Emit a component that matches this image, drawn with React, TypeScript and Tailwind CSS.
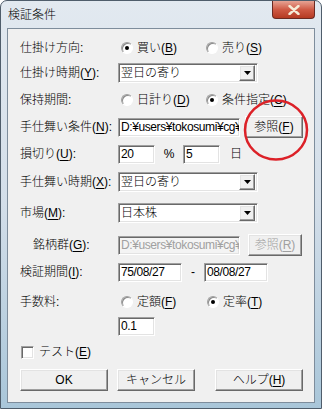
import type { ReactNode } from 'react'

const sunken =
  'border border-t-[#a0a0a0] border-l-[#a0a0a0] border-r-white border-b-white shadow-[inset_1px_1px_0_#696969,inset_-1px_-1px_0_#e3e3e3]'
const raised =
  'border border-t-white border-l-white border-r-[#696969] border-b-[#696969] shadow-[inset_-1px_-1px_0_#a0a0a0,inset_1px_1px_0_#e3e3e3] bg-[#f0f0f0]'

function Key({ children }: { children: ReactNode }) {
  return <span className="underline underline-offset-2">{children}</span>
}

function Edit({ w, value, disabled = false }: { w: string; value: string; disabled?: boolean }) {
  return (
    <div
      className={`${w} h-[19px] ${sunken} ${disabled ? 'bg-[#f4f4f4] text-[#a0a0a0]' : 'bg-white text-black'} flex items-center overflow-hidden whitespace-nowrap pl-[2px] tracking-[-0.4px]`}
    >
      {value}
    </div>
  )
}

function Combo({ value }: { value: string }) {
  return (
    <div className={`w-[140px] h-[20px] ${sunken} bg-white flex items-center pl-[2px] pr-[2px]`}>
      <span className="flex-1 whitespace-nowrap">{value}</span>
      <div className={`w-[16px] h-[16px] ${raised} flex items-center justify-center`}>
        <svg width="7" height="4" viewBox="0 0 7 4">
          <path d="M0 0h7L3.5 4z" fill="#000" />
        </svg>
      </div>
    </div>
  )
}

function Radio({ checked = false, children, w }: { checked?: boolean; children: ReactNode; w?: string }) {
  return (
    <div className={`flex items-center ${w ?? ''}`}>
      <div className="ml-[3px] w-[12px] h-[12px] rounded-full border border-t-[#a0a0a0] border-l-[#a0a0a0] border-r-white border-b-white bg-white shadow-[inset_1px_1px_0_#8a8a8a] flex items-center justify-center">
        {checked && <div className="w-[4px] h-[4px] rounded-full bg-black" />}
      </div>
      <span className="ml-[4px] whitespace-nowrap">{children}</span>
    </div>
  )
}

function Btn({ w, children, disabled = false }: { w: string; children: ReactNode; disabled?: boolean }) {
  return (
    <div
      className={`${w} h-[22px] ${raised} flex items-center justify-center whitespace-nowrap ${disabled ? 'text-[#a0a0a0]' : 'text-black'}`}
    >
      {children}
    </div>
  )
}

function Row({ label, children, className = '', h = 'h-[20px]' }: { label: ReactNode; children?: ReactNode; className?: string; h?: string }) {
  return (
    <div className={`flex items-center ${h} ${className}`}>
      <div className="w-[98px] shrink-0 whitespace-nowrap">{label}</div>
      {children}
    </div>
  )
}

export default function App() {
  return (
    <div className="w-[322px] h-[409px] relative overflow-hidden rounded-t-[7px] border border-[#4f5d6b] bg-gradient-to-b from-[#e2e9f0] via-[#d3dee9] to-[#a9c6d9] text-[12px] leading-[14px] font-light text-black font-['Liberation_Sans','Noto_Sans_CJK_JP',sans-serif]">
      {/* title bar */}
      <div className="h-[27px] flex items-start justify-between">
        <div className="pl-[7px] pt-[7px] text-[12px]">検証条件</div>
        <div className="mr-[6px] w-[43px] h-[18px] rounded-b-[4px] border border-t-0 border-[#6b2a22] bg-gradient-to-b from-[#e6a394] via-[#cf5a45] to-[#b53a22] flex items-center justify-center">
          <svg width="12" height="10" viewBox="0 0 12 10">
            <path d="M1.5 1l9 8M10.5 1l-9 8" stroke="#f5ecd8" strokeWidth="2.4" strokeLinecap="round" />
          </svg>
        </div>
      </div>

      {/* client area */}
      <div className="mx-[6px] h-[375px] border border-[#7e8d9c] bg-[#f0f0f0] pl-[12px] pt-[9px]">
        <Row label="仕掛け方向:">
          <Radio checked w="w-[85px]">
            買い(<Key>B</Key>)
          </Radio>
          <Radio>
            売り(<Key>S</Key>)
          </Radio>
        </Row>

        <Row label={<>仕掛け時期(<Key>Y</Key>):</>} className="mt-[5px]">
          <Combo value="翌日の寄り" />
        </Row>

        <Row label="保持期間:" className="mt-[7px]">
          <Radio w="w-[85px]">
            日計り(<Key>D</Key>)
          </Radio>
          <Radio checked>
            条件指定(<Key>C</Key>)
          </Radio>
        </Row>

        <Row label={<>手仕舞い条件(<Key>N</Key>):</>} className="mt-[6px]" h="h-[22px]">
          <Edit w="w-[122px]" value="D:¥users¥tokosumi¥cg¥" />
          <div className="ml-[5px]">
            <Btn w="w-[58px]">
              参照(<Key>F</Key>)
            </Btn>
          </div>
        </Row>

        <Row label={<>損切り(<Key>U</Key>):</>} className="mt-[6px]">
          <Edit w="w-[37px]" value="20" />
          <div className="w-[28px] text-center">%</div>
          <Edit w="w-[37px]" value="5" />
          <div className="ml-[10px]">日</div>
        </Row>

        <Row label={<>手仕舞い時期(<Key>X</Key>):</>} className="mt-[8px]">
          <Combo value="翌日の寄り" />
        </Row>

        <Row label={<>市場(<Key>M</Key>):</>} className="mt-[11px]">
          <Combo value="日本株" />
        </Row>

        <Row label={<span className="pl-[13px]">銘柄群(<Key>G</Key>):</span>} className="mt-[11px]" h="h-[22px]">
          <Edit w="w-[122px]" value="D:¥users¥tokosumi¥cg¥" disabled />
          <div className="ml-[8px]">
            <Btn w="w-[54px]" disabled>
              参照(<Key>R</Key>)
            </Btn>
          </div>
        </Row>

        <Row label={<>検証期間(<Key>I</Key>):</>} className="mt-[6px]">
          <Edit w="w-[64px]" value="75/08/27" />
          <div className="w-[22px] text-center">-</div>
          <Edit w="w-[64px]" value="08/08/27" />
        </Row>

        <Row label="手数料:" className="mt-[10px]">
          <Radio w="w-[86px]">
            定額(<Key>F</Key>)
          </Radio>
          <Radio checked>
            定率(<Key>T</Key>)
          </Radio>
        </Row>

        <div className="mt-[4px] h-[20px] flex items-center pl-[98px]">
          <Edit w="w-[37px]" value="0.1" />
        </div>

        <div className="mt-[6px] h-[20px] flex items-center">
          <div className={`ml-[1px] w-[13px] h-[13px] ${sunken} bg-white`} />
          <span className="ml-[5px]">
            テスト(<Key>E</Key>)
          </span>
        </div>

        <div className="mt-[7px] flex items-center">
          <Btn w="w-[88px]">OK</Btn>
          <div className="ml-[9px]">
            <Btn w="w-[78px]">キャンセル</Btn>
          </div>
          <div className="ml-[20px]">
            <Btn w="w-[88px]">
              ヘルプ(<Key>H</Key>)
            </Btn>
          </div>
        </div>
      </div>

      {/* hand-drawn red circle annotation */}
      <svg className="absolute left-[240px] top-[96px]" width="70" height="66" viewBox="0 0 70 66">
        <ellipse cx="35" cy="33" rx="31" ry="29.5" fill="none" stroke="#dc2128" strokeWidth="2.5" />
      </svg>
    </div>
  )
}
